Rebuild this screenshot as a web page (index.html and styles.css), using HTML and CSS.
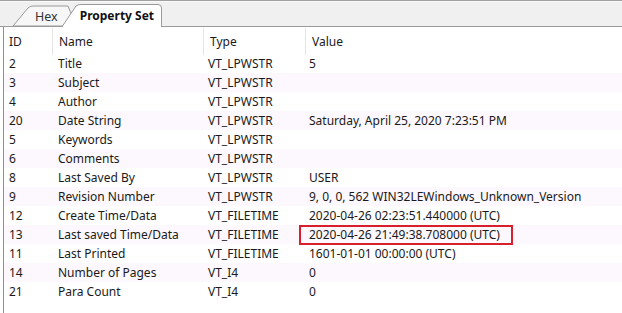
FILE: index.html
```html
<!DOCTYPE html>
<html lang="ko">
<head>
  <meta charset="UTF-8">
  <title>Property Set</title>
  <link rel="stylesheet" href="styles.css">
</head>
<body>
  <div class="tabs">
    <svg class="tab-shapes" width="622" height="27" viewBox="0 0 622 27">
      <path d="M13 26 L28 8 Q30 6 33 6 L68 6 L76 26 Z" fill="#f7f7f7" stroke="#9a9a9a" stroke-width="1"/>
      <path d="M62.5 27 L62.5 26 L76 6 Q78 4.5 81 4.5 L158 4.5 Q161.5 4.5 161.5 8 L161.5 27" fill="#ffffff" stroke="#9a9a9a" stroke-width="1"/>
    </svg>
    <span class="tab">Hex</span>
    <span class="tab active">Property Set</span>
  </div>

  <div class="list">
    <div class="row head">
      <div class="c id">ID</div>
      <div class="c name">Name</div>
      <div class="c type">Type</div>
      <div class="c val">Value</div>
    </div>
    <div class="row"><div class="c id">2</div><div class="c name">Title</div><div class="c type">VT_LPWSTR</div><div class="c val">5</div></div>
    <div class="row"><div class="c id">3</div><div class="c name">Subject</div><div class="c type">VT_LPWSTR</div><div class="c val"></div></div>
    <div class="row"><div class="c id">4</div><div class="c name">Author</div><div class="c type">VT_LPWSTR</div><div class="c val"></div></div>
    <div class="row"><div class="c id">20</div><div class="c name">Date String</div><div class="c type">VT_LPWSTR</div><div class="c val">Saturday, April 25, 2020 7:23:51 PM</div></div>
    <div class="row"><div class="c id">5</div><div class="c name">Keywords</div><div class="c type">VT_LPWSTR</div><div class="c val"></div></div>
    <div class="row"><div class="c id">6</div><div class="c name">Comments</div><div class="c type">VT_LPWSTR</div><div class="c val"></div></div>
    <div class="row"><div class="c id">8</div><div class="c name">Last Saved By</div><div class="c type">VT_LPWSTR</div><div class="c val">USER</div></div>
    <div class="row"><div class="c id">9</div><div class="c name">Revision Number</div><div class="c type">VT_LPWSTR</div><div class="c val">9, 0, 0, 562 WIN32LEWindows_Unknown_Version</div></div>
    <div class="row"><div class="c id">12</div><div class="c name">Create Time/Data</div><div class="c type">VT_FILETIME</div><div class="c val">2020-04-26 02:23:51.440000 (UTC)</div></div>
    <div class="row"><div class="c id">13</div><div class="c name">Last saved Time/Data</div><div class="c type">VT_FILETIME</div><div class="c val"><span class="mark">2020-04-26 21:49:38.708000 (UTC)</span></div></div>
    <div class="row"><div class="c id">11</div><div class="c name">Last Printed</div><div class="c type">VT_FILETIME</div><div class="c val">1601-01-01 00:00:00 (UTC)</div></div>
    <div class="row"><div class="c id">14</div><div class="c name">Number of Pages</div><div class="c type">VT_I4</div><div class="c val">0</div></div>
    <div class="row"><div class="c id">21</div><div class="c name">Para Count</div><div class="c type">VT_I4</div><div class="c val">0</div></div>
  </div>
</body>
</html>
```

FILE: styles.css
```css
body {
  margin: 0;
  font-family: "Noto Sans", "Noto Sans CJK KR", sans-serif;
  font-size: 12px;
  color: #1a1a1a;
  background: #fff;
  height: 313px;
  overflow: hidden;
}

.tabs {
  position: relative;
  height: 25px;
  background: #f0f0f0;
  border-top: 1px solid #a0a0a0;
  box-shadow: inset 0 1px 0 #fafafa;
  display: flex;
  align-items: flex-end;
}

.tab-shapes {
  position: absolute;
  left: 0;
  top: -1px;
}

/* bottom line of the strip, interrupted by the active tab */
.tabs::after {
  content: "";
  position: absolute;
  left: 0;
  right: 0;
  bottom: -1px;
  height: 1px;
  background: linear-gradient(to right, #9a9a9a 62px, transparent 62px, transparent 162px, #9a9a9a 162px);
}

.tab {
  position: relative;
  line-height: 19px;
  font-size: 12.5px;
  color: #333;
}

.tab:first-of-type {
  margin-left: 35px;
}

.tab.active {
  margin-left: 22px;
  font-size: 12px;
  font-weight: bold;
  color: #111;
  line-height: 20px;
}

.list {
  margin-left: 3px;
  border-left: 1px solid #8d9096;
  height: 287px;
  padding-top: 1px;
}

.row {
  display: flex;
  height: 19px;
  line-height: 19px;
  white-space: nowrap;
}

.row:nth-child(odd):not(.head) {
  background: #fdf8fd;
}

.row.head {
  height: 27px;
  line-height: 27px;
  padding-top: 1px;
  margin-bottom: -1px;
}

.c {
  flex: none;
  padding-left: 6px;
}

.id { width: 43px; padding-left: 5px; }
.name { width: 144px; }
.type { width: 95px; }
.val { flex: 1; }

.head .c {
  border-right: 1px solid #e5e5e5;
}

.head .val {
  border-right: none;
}

.mark {
  position: relative;
}

.mark::after {
  content: "";
  position: absolute;
  left: -10px;
  right: -13px;
  top: -1px;
  bottom: -2px;
  border: 2px solid #d8202c;
}
```
